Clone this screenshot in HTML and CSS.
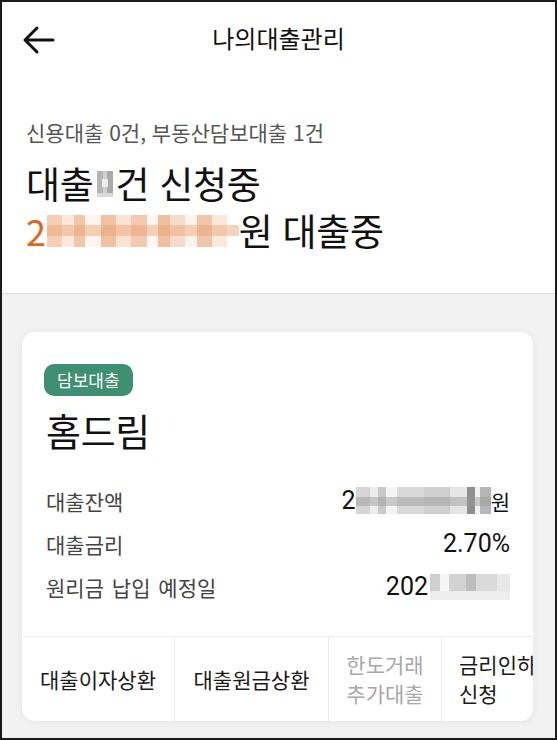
FILE: index.html
```html
<!DOCTYPE html>
<html lang="ko">
<head>
<meta charset="utf-8">
<link rel="stylesheet" href="styles.css">
</head>
<body>
<div class="frame">
  <header class="top">
    <svg class="back" width="34" height="30" viewBox="0 0 34 30" fill="none" stroke="#111" stroke-width="3" stroke-linecap="round" stroke-linejoin="round">
      <path d="M31 15H3M15 3L3 15l12 12"/>
    </svg>
    <h1 class="title">나의대출관리</h1>
  </header>
  <section class="summary">
    <p class="sub">신용대출 0건, 부동산담보대출 1건</p>
    <p class="big">대출<span class="mosaic m-count"></span>건 신청중</p>
    <p class="big"><span class="orange">2</span><span class="mosaic m-amount"></span>원 대출중</p>
  </section>
  <main class="list">
    <article class="card">
      <div class="card-body">
        <span class="badge">담보대출</span>
        <h2 class="name">홈드림</h2>
        <dl class="rows">
          <div class="row"><dt>대출잔액</dt><dd>2<span class="mosaic m-bal"></span><span class="won">원</span></dd></div>
          <div class="row"><dt>대출금리</dt><dd>2.70%</dd></div>
          <div class="row"><dt>원리금 납입 예정일</dt><dd>202<span class="mosaic m-date"></span></dd></div>
        </dl>
      </div>
      <nav class="actions">
        <div class="act a1">대출이자상환</div>
        <div class="act a2">대출원금상환</div>
        <div class="act a3 off">한도거래<br>추가대출</div>
        <div class="act a4 left">금리인하<br>신청</div>
      </nav>
    </article>
  </main>
</div>
</body>
</html>
```
FILE: styles.css
```css
* { box-sizing: border-box; margin: 0; padding: 0; }
html, body { width: 557px; height: 740px; overflow: hidden; }
body {
  font-family: "Noto Sans CJK KR", "Noto Sans", sans-serif;
  color: #111;
  background: #fff;
}
.frame {
  width: 557px;
  height: 740px;
  border: 2px solid #1a1a1a;
  display: flex;
  flex-direction: column;
  background: #f2f2f2;
  overflow: hidden;
}
.top {
  position: relative;
  height: 76px;
  flex: none;
  background: #fff;
  display: flex;
  align-items: center;
  justify-content: center;
}
.back { position: absolute; left: 20px; top: 23px; }
.title { font-size: 24px; font-weight: 400; line-height: 30px; margin-top: -4px; color: #111; }
.summary {
  flex: none;
  background: #fff;
  padding: 40px 24px 39px;
  border-bottom: 1px solid #dcdcdc;
}
.sub { font-size: 21px; color: #555; line-height: 28px; margin-bottom: 14px; }
.big { font-size: 37px; line-height: 47px; letter-spacing: -0.3px; display: flex; align-items: center; color: #111; }
.orange { color: #e0651c; font-size: 36px; }
.mosaic { display: inline-block; flex: none; }
.m-count {
  width: 16px; height: 26px; margin: 0 2px 0 4px;
  background:
    linear-gradient(#fff0 0 30%, #ededed 30% 62%, #fff0 62%) 5px 0/6px 100% no-repeat,
    linear-gradient(#fff0 0 85%, #d9d9d9 85%),
    linear-gradient(90deg, #b4b4b4 0 35%, #cfcfcf 35% 65%, #a9a9a9 65%);
}
.m-amount {
  width: 192px; height: 32px; margin-left: 1px;
  background:
    linear-gradient(#fff0 0 32%, rgba(232, 160, 110, 0.45) 32% 66%, #fff0 66%),
    linear-gradient(90deg, #f4cfb6 0 8%, #fbe9dd 8% 14%, #f2c6a8 14% 20%, #fff5ee 20% 28%, #f0c2a2 28% 36%, #fbe3d3 36% 44%, #f3cab0 44% 52%, #fff7f1 52% 58%, #eec0a0 58% 64%, #f8dccb 64% 72%, #fff3ec 72% 78%, #f1c5a7 78% 86%, #fde9dc 86% 94%, #fff 94%);
}
.list { flex: 1; padding: 38px 22px 0 20px; }
.card {
  background: #fff;
  border-radius: 13px;
  box-shadow: 0 1px 8px rgba(0,0,0,0.06);
  overflow: hidden;
}
.card-body { padding: 32px 23px 28px 22px; }
.badge {
  display: inline-block;
  background: #3f8f72;
  color: #fff;
  font-size: 17px;
  line-height: 32px;
  height: 32px;
  padding: 0 13px;
  border-radius: 10px;
}
.name { font-size: 38px; font-weight: 400; line-height: 46px; margin-top: 11px; margin-bottom: 26px; letter-spacing: -0.3px; padding-left: 2px; }
.rows { display: flex; flex-direction: column; }
.row { display: flex; justify-content: space-between; align-items: center; height: 43px; }
.row dt { font-size: 21px; color: #444; word-spacing: 2px; padding-left: 2px; }
.row dd { font-size: 25px; color: #111; display: flex; align-items: center; font-family: "Roboto", "Noto Sans CJK KR", sans-serif; }
.won { font-family: "Noto Sans CJK KR", sans-serif; font-size: 21px; }
.m-bal {
  width: 135px; height: 27px;
  background:
    linear-gradient(#fff0 0 36%, rgba(150,150,150,0.45) 36% 70%, #fff0 70%),
    linear-gradient(90deg, #d5d5d5 0 10%, #ececec 10% 16%, #c9c9c9 16% 22%, #f4f4f4 22% 30%, #d9d9d9 30% 50%, #cfcfcf 50% 70%, #e6e6e6 70% 82%, #8f8f8f 82% 88%, #f2f2f2 88% 92%, #b6b6b6 92%);
}
.m-date {
  width: 80px; height: 26px; margin-left: 2px;
  background:
    linear-gradient(#fff0 0 65%, #ededed 65%),
    linear-gradient(90deg, #cfcfcf 0 12%, #f5f5f5 12% 24%, #d2d2d2 24% 45%, #bdbdbd 45% 58%, #dadada 58% 84%, #e8e8e8 84%);
}
.actions {
  display: flex;
  border-top: 1px solid #ececec;
  height: 85px;
}
.act {
  flex: none;
  display: flex;
  align-items: center;
  justify-content: center;
  text-align: center;
  font-size: 21px;
  line-height: 29px;
  color: #1a1a1a;
  border-right: 1px solid #ececec;
}
.a1 { width: 153px; }
.a2 { width: 154px; }
.a3 { width: 113px; }
.a4 { width: 120px; justify-content: flex-start; padding-left: 17px; text-align: left; border-right: none; }
.off { color: #a8a8a8; }
```
